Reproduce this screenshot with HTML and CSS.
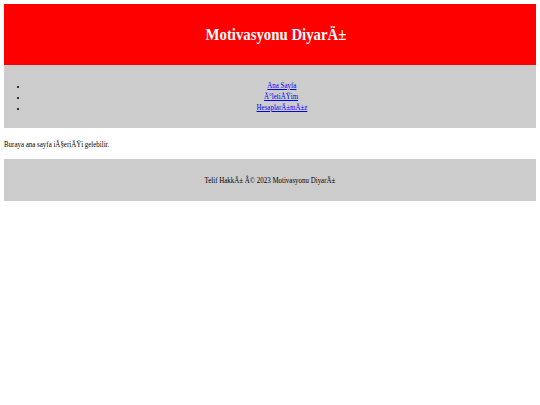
FILE: index.html
```html
<!DOCTYPE html>
<html lang="tr">
<head>
<meta charset="utf-8">
<title>Motivasyonu DiyarÄ±</title>
<link rel="stylesheet" href="styles.css">
</head>
<body>
<header class="site-header">
  <h1 class="site-title"><span class="squeeze">Motivasyonu DiyarÄ±</span></h1>
</header>
<nav class="site-nav">
  <ul class="nav-list">
    <li><a class="squeeze" href="#">Ana Sayfa</a></li>
    <li><a class="squeeze" href="#">Ä°letiÅŸim</a></li>
    <li><a class="squeeze" href="#">HesaplarÄ±mÄ±z</a></li>
  </ul>
</nav>
<main class="content">
  <p class="intro"><span class="squeeze squeeze-left">Buraya ana sayfa iÃ§eriÄŸi gelebilir.</span></p>
</main>
<footer class="site-footer">
  <p class="copy"><span class="squeeze">Telif HakkÄ± Â© 2023 Motivasyonu DiyarÄ±</span></p>
</footer>
</body>
</html>
```
FILE: styles.css
```css
html, body {
  background: #ffffff;
}
body {
  margin: 4px;
  font-family: "Liberation Serif", "Times New Roman", serif;
  font-size: 9px;
  color: #000000;
}
.squeeze {
  display: inline-block;
  transform: scaleX(0.77);
  transform-origin: center;
  white-space: nowrap;
}
.squeeze-left {
  transform-origin: left center;
}
.site-header {
  background: #ff0000;
  height: 61px;
  display: flex;
  align-items: center;
  justify-content: center;
}
.site-title {
  margin: 0 0 0 11px;
  color: #ffffff;
  font-size: 17px;
  font-weight: bold;
  line-height: 19px;
}
.site-title .squeeze {
  transform: scaleX(0.87);
}
.site-nav {
  background: #cccccc;
  padding: 15px 0 15px;
}
.nav-list {
  margin: 0;
  padding-left: 23px;
  text-align: center;
}
.nav-list li {
  line-height: 11px;
  font-size: 8px;
}
.nav-list li::marker {
  font-size: 6px;
}
.nav-list a {
  color: #0000ee;
  font-size: 9px;
  line-height: 11px;
}
.content {
  padding: 12px 0 10px;
}
.intro {
  margin: 0;
  line-height: 9px;
}
.site-footer {
  background: #cccccc;
  height: 42px;
  display: flex;
  align-items: center;
  justify-content: center;
}
.copy {
  margin: 0;
  line-height: 9px;
}
```
